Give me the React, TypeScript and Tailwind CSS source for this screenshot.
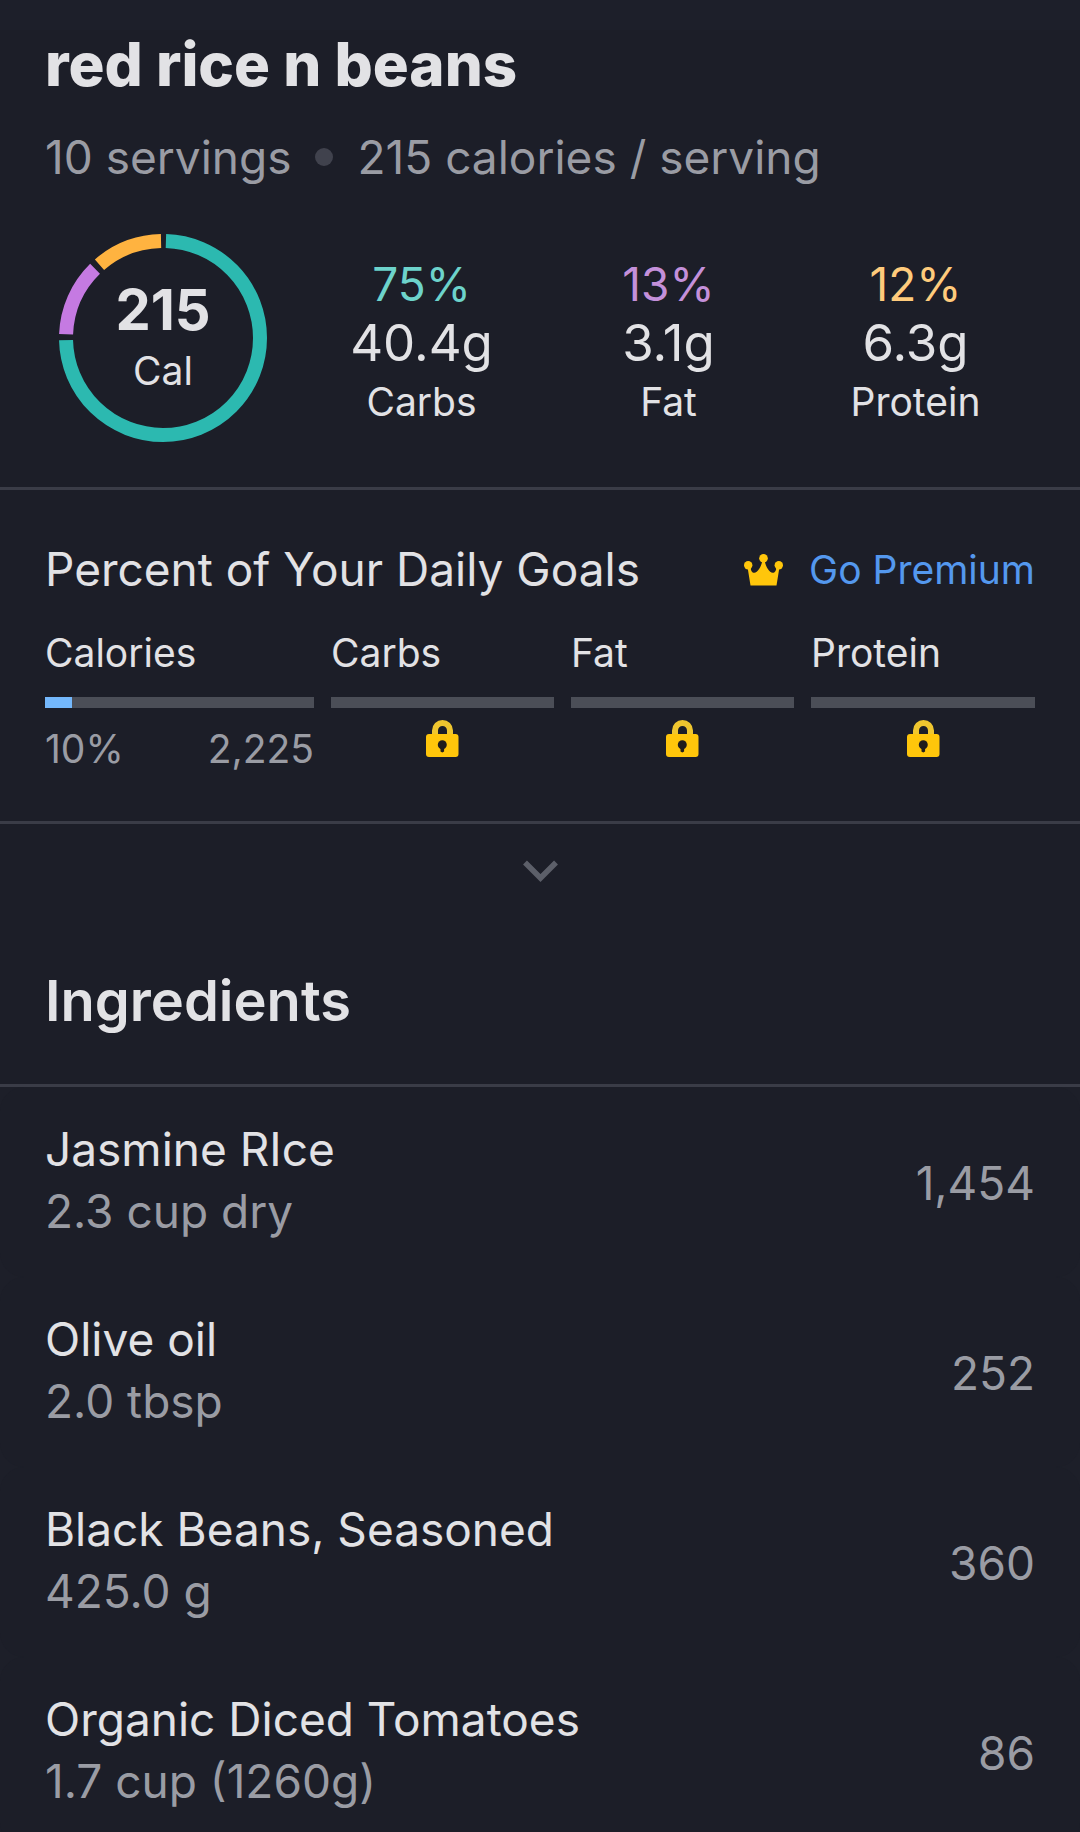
import React from 'react';
import clsx from 'clsx';

interface Macro {
  label: string;
  percent: number;
  grams: string;
  textColor: string;
  stroke: string;
}

interface Ingredient {
  name: string;
  amount: string;
  calories: string;
}

const macros: Macro[] = [
  { label: 'Carbs', percent: 75, grams: '40.4g', textColor: 'text-[#6dd3cb]', stroke: '#2cb9b0' },
  { label: 'Fat', percent: 13, grams: '3.1g', textColor: 'text-[#c490da]', stroke: '#c57ae2' },
  { label: 'Protein', percent: 12, grams: '6.3g', textColor: 'text-[#ffcb7c]', stroke: '#ffb340' },
];

const ingredients: Ingredient[] = [
  { name: 'Jasmine RIce', amount: '2.3 cup dry', calories: '1,454' },
  { name: 'Olive oil', amount: '2.0 tbsp', calories: '252' },
  { name: 'Black Beans, Seasoned', amount: '425.0 g', calories: '360' },
  { name: 'Organic Diced Tomatoes', amount: '1.7 cup (1260g)', calories: '86' },
];

const lockedGoals = ['Carbs', 'Fat', 'Protein'];

function CrownIcon() {
  return (
    <svg viewBox="0 0 39 32" className="h-8 w-[39px]" fill="#ffc60b" aria-hidden="true">
      <circle cx="4.2" cy="11.2" r="4.2" />
      <circle cx="19.5" cy="4.3" r="4.3" />
      <circle cx="34.8" cy="11.2" r="4.2" />
      <path d="M6.500 31.500 3.500 13 6.500 12.500C6.800 16.500 7.800 18.800 10.300 18.800 13.500 18.800 17.300 12.500 18.300 7H20.700C21.700 12.500 25.500 18.800 28.700 18.800 31.200 18.800 32.200 16.500 32.500 12.500L35.500 13 32.500 31.500Z" />
    </svg>
  );
}

function LockIcon() {
  return (
    <svg viewBox="0 0 33 37" className="h-[37px] w-[33px]" aria-hidden="true">
      <path d="M9 17v-6.500a7.500 7.500 0 0 1 15 0V17" fill="none" stroke="#efc62f" strokeWidth="6" />
      <rect x="0" y="14" width="32.500" height="23" rx="3" fill="#ffc60b" />
      <circle cx="16.300" cy="24.700" r="4.500" fill="#1f1d1c" />
      <path d="M14.500 26h3.600v5.500l-1.800 1-1.800-1z" fill="#1f1d1c" />
    </svg>
  );
}

function CalorieRing() {
  const radius = 97;
  const circumference = 2 * Math.PI * radius;
  const gap = 6;
  let start = 0;

  return (
    <div className="relative size-[208px] shrink-0">
      <svg viewBox="0 0 208 208" className="size-full -rotate-90" fill="none" aria-hidden="true">
        {macros.map((macro) => {
          const length = (macro.percent / 100) * circumference;
          const offset = start + gap / 2;
          start += length;
          return (
            <circle
              key={macro.label}
              cx="104"
              cy="104"
              r={radius}
              stroke={macro.stroke}
              strokeWidth="14"
              strokeDasharray={`${length - gap} ${circumference - length + gap}`}
              strokeDashoffset={-offset}
            />
          );
        })}
      </svg>
      <div className="absolute inset-0 flex flex-col items-center justify-center pt-0.5">
        <span className="text-[56px] leading-[64px] font-bold">215</span>
        <span className="text-[39px] leading-[58px]">Cal</span>
      </div>
    </div>
  );
}

export default function App() {
  return (
    <div className="min-h-screen bg-[#1c1e28] font-['Inter',sans-serif] text-[#e2e2e5]">
      <div className="h-[30px] bg-[#1d1f2a]" />

      <main>
        <header className="border-b-3 border-[#3a3c47] pt-1 pb-[45px]">
          <h1 className="px-[45px] text-[60px] leading-[60px] font-extrabold">red rice n beans</h1>
          <p className="mt-[35px] flex items-center px-[45px] text-[46px] leading-[56px] text-[#9a9ca4]">
            <span>10 servings</span>
            <span className="mx-6 size-[18px] rounded-full bg-[#40424d]" />
            <span>215 calories / serving</span>
          </p>

          <div className="mt-[49px] flex items-start gap-[31px] pr-[41px] pl-[59px]">
            <CalorieRing />
            <div className="mt-[21px] grid flex-1 grid-cols-3 text-center">
              {macros.map((macro) => (
                <div key={macro.label} className="flex flex-col">
                  <span className={clsx('text-[46px] leading-[58px]', macro.textColor)}>{macro.percent}%</span>
                  <span className="text-[51px] leading-[60px]">{macro.grams}</span>
                  <span className="text-[39px] leading-[58px]">{macro.label}</span>
                </div>
              ))}
            </div>
          </div>
        </header>

        <section className="border-b-3 border-[#3a3c47] px-[45px] pt-[51px] pb-12">
          <div className="flex items-baseline justify-between">
            <h2 className="text-[46px] leading-[56px]">Percent of Your Daily Goals</h2>
            <a href="#premium" className="flex items-center gap-[26px] text-[39px] leading-[56px] text-[#5498ee]">
              <CrownIcon />
              Go Premium
            </a>
          </div>

          <div className="mt-[31px] grid grid-cols-[269fr_223fr_223fr_224fr] gap-[17px] text-[39px] leading-[48px]">
            <div>
              <div>Calories</div>
              <div className="mt-5 h-[11px] bg-[#4b4e57]">
                <div className="h-full w-1/10 bg-[#74b8fc]" />
              </div>
              <div className="mt-[17px] flex justify-between text-[#9a9ca4]">
                <span>10%</span>
                <span>2,225</span>
              </div>
            </div>
            {lockedGoals.map((goal) => (
              <div key={goal}>
                <div>{goal}</div>
                <div className="mt-5 h-[11px] bg-[#4b4e57]" />
                <div className="mt-3 flex justify-center">
                  <LockIcon />
                </div>
              </div>
            ))}
          </div>
        </section>

        <button type="button" aria-label="Show more nutrition" className="flex w-full justify-center pt-9 pb-9">
          <svg viewBox="0 0 35 22" className="h-[22px] w-[35px]" fill="none" aria-hidden="true">
            <path d="M2 2.500 17.500 18 33 2.500" stroke="#5c5f69" strokeWidth="5.500" />
          </svg>
        </button>

        <section>
          <h2 className="border-b-3 border-[#3a3c47] px-[45px] pt-[49px] pb-[49px] text-[56px] leading-[68px] font-semibold">
            Ingredients
          </h2>
          <ul className="bg-[#1d1f29]">
            {ingredients.map((item) => (
              <li
                key={item.name}
                className="flex items-end justify-between rounded-3xl bg-[#1c1e28] px-[45px] pt-[31px] pb-[35px] text-[46px] leading-[62px]"
              >
                <div>
                  <div>{item.name}</div>
                  <div className="text-[#9a9ca4]">{item.amount}</div>
                </div>
                <span className="pb-7 text-[#9a9ca4]">{item.calories}</span>
              </li>
            ))}
          </ul>
        </section>
      </main>
    </div>
  );
}
